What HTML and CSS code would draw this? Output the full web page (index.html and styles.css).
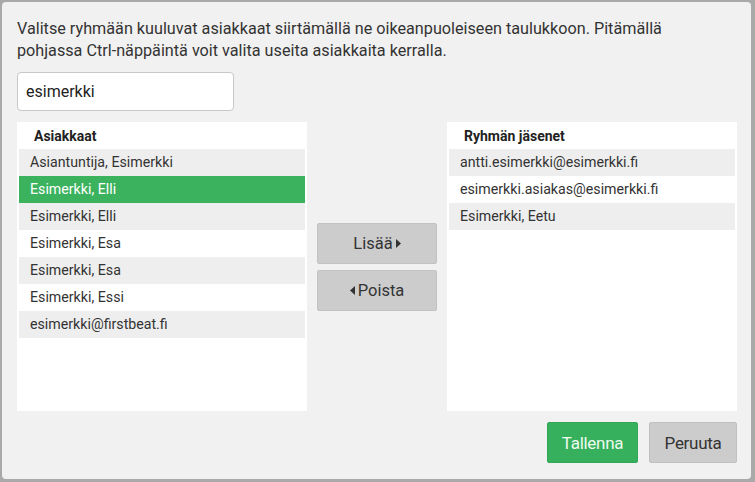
FILE: index.html
```html
<!DOCTYPE html>
<html lang="fi">
<head>
<meta charset="utf-8">
<title>Ryhmän jäsenet</title>
<link rel="stylesheet" href="styles.css">
</head>
<body>
<div class="dialog">
  <p class="intro">Valitse ryhmään kuuluvat asiakkaat siirtämällä ne oikeanpuoleiseen taulukkoon. Pitämällä<br>pohjassa Ctrl-näppäintä voit valita useita asiakkaita kerralla.</p>
  <input class="search" type="text" value="esimerkki">
  <div class="transfer">
    <div class="list">
      <div class="list-head">Asiakkaat</div>
      <div class="row alt">Asiantuntija, Esimerkki</div>
      <div class="row selected">Esimerkki, Elli</div>
      <div class="row alt">Esimerkki, Elli</div>
      <div class="row">Esimerkki, Esa</div>
      <div class="row alt">Esimerkki, Esa</div>
      <div class="row">Esimerkki, Essi</div>
      <div class="row alt">esimerkki@firstbeat.fi</div>
    </div>
    <div class="moves">
      <button class="btn move">Lisää<svg class="tri" width="5" height="9" viewBox="0 0 5 9"><path d="M0 0L5 4.5L0 9Z" fill="#333"/></svg></button>
      <button class="btn move"><svg class="tri" width="5" height="9" viewBox="0 0 5 9"><path d="M5 0L0 4.5L5 9Z" fill="#333"/></svg>Poista</button>
    </div>
    <div class="list">
      <div class="list-head">Ryhmän jäsenet</div>
      <div class="row alt">antti.esimerkki@esimerkki.fi</div>
      <div class="row">esimerkki.asiakas@esimerkki.fi</div>
      <div class="row alt">Esimerkki, Eetu</div>
    </div>
  </div>
  <div class="footer">
    <button class="btn primary">Tallenna</button>
    <button class="btn secondary">Peruuta</button>
  </div>
</div>
</body>
</html>
```

FILE: styles.css
```css
html, body {
  margin: 0;
  padding: 0;
}
body {
  background: #a9a9a9;
  width: 755px;
  height: 482px;
  overflow: hidden;
  font-family: Roboto, "Liberation Sans", Arial, sans-serif;
  color: #333;
}
.dialog {
  box-sizing: border-box;
  margin: 2px 0 0 2px;
  width: 749px;
  height: 477px;
  background: #f1f1f1;
  border-radius: 4px;
  padding: 16px 14px 0 15px;
}
.intro {
  margin: 0;
  font-size: 16.2px;
  line-height: 22px;
  color: #333;
}
.search {
  display: block;
  box-sizing: border-box;
  margin-top: 10px;
  width: 217px;
  height: 39px;
  border: 1px solid #c8c8c8;
  border-radius: 4px;
  background: #fff;
  padding: 0 8px;
  font-family: Roboto, "Liberation Sans", Arial, sans-serif;
  font-size: 16px;
  color: #222;
  outline: none;
}
.transfer {
  display: flex;
  margin-top: 11px;
  height: 289px;
}
.list {
  width: 290px;
  background: #fff;
  padding: 0 2px;
  box-sizing: border-box;
}
.list-head {
  height: 27px;
  line-height: 29px;
  padding-left: 15px;
  font-size: 14px;
  font-weight: bold;
  color: #222;
}
.row {
  height: 27px;
  line-height: 27px;
  padding-left: 11px;
  font-size: 14.2px;
  color: #333;
}
.row.alt {
  background: #eeeeee;
}
.row.selected {
  background: #3bb25e;
  color: #fff;
}
.moves {
  width: 140px;
  display: flex;
  flex-direction: column;
  align-items: center;
  justify-content: center;
  gap: 6px;
}
.btn {
  box-sizing: border-box;
  height: 41px;
  border-radius: 2px;
  font-family: Roboto, "Liberation Sans", Arial, sans-serif;
  cursor: pointer;
  padding: 0;
}
.move {
  width: 120px;
  background: #cccccc;
  border: 1px solid #c2c2c2;
  font-size: 16.5px;
  color: #333;
  display: flex;
  align-items: center;
  justify-content: center;
  gap: 3px;
}
.tri {
  display: block;
}
.footer {
  display: flex;
  justify-content: flex-end;
  gap: 11px;
  margin-top: 11px;
  padding-right: 0;
}
.primary {
  width: 91px;
  background: #36b05c;
  border: 1px solid #32a856;
  color: #eefbef;
  font-size: 17px;
  letter-spacing: -0.3px;
}
.secondary {
  width: 88px;
  background: #cccccc;
  border: 1px solid #c0c0c0;
  color: #333;
  font-size: 17px;
  letter-spacing: -0.3px;
}
```
